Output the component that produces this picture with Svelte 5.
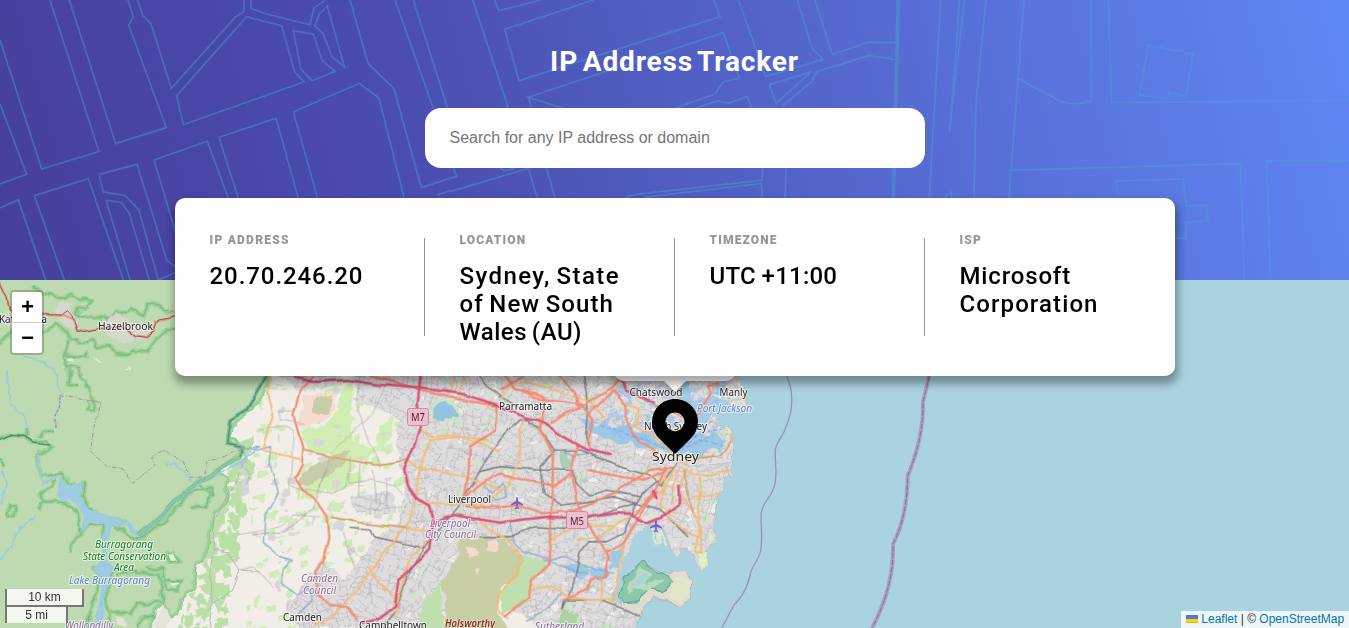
<script>
  const details = [
    { label: 'IP ADDRESS', lines: [['20.70.246.20', 0.93]], ws: 0, hs: 1.25 },
    { label: 'LOCATION', lines: [['Sydney, State', 1.42], ['of New South', 1.1], ['Wales (AU)', 0.5]], ws: -1.6, hs: 1.15 },
    { label: 'TIMEZONE', lines: [['UTC +11:00', 0.22]], ws: -0.4, hs: 1.15 },
    { label: 'ISP', lines: [['Microsoft', 0.85], ['Corporation', 1.1]], ws: 0, hs: 1.15 }
  ];

  let seed = 7;
  const rnd = () => ((seed = (seed * 16807) % 2147483647) / 2147483647);

  // Minor street mesh: rotated blocks of short lines with varied density
  function streets(x0, y0, x1, y1) {
    let d = '';
    for (let y = y0; y < y1; y += 19)
      for (let x = x0; x < x1; x += 19) {
        const a = rnd() * 1.1 - 0.3;
        const c = Math.cos(a), s = Math.sin(a);
        const cx = x + 8 + rnd() * 4, cy = y + 8 + rnd() * 4;
        for (let k = -9; k <= 9; k += 4.2 + rnd() * 5) {
          const l = 3 + rnd() * 8, m = 3 + rnd() * 8, o = rnd() * 6 - 3;
          d += `M${(cx - l * c - k * s + o).toFixed(1)} ${(cy - l * s + k * c).toFixed(1)}l${(2 * l * c).toFixed(1)} ${(2 * l * s).toFixed(1)}`;
          d += `M${(cx + m * s + k * c).toFixed(1)} ${(cy - m * c + k * s + o).toFixed(1)}l${(-2 * m * s).toFixed(1)} ${(2 * m * c).toFixed(1)}`;
        }
      }
    return d;
  }

  function patches(n, x0, y0, x1, y1, max) {
    let d = '';
    for (let i = 0; i < n; i++) {
      const x = x0 + rnd() * (x1 - x0), y = y0 + rnd() * (y1 - y0);
      const w = 1.5 + rnd() * max, h = 1.5 + rnd() * max;
      d += `M${x.toFixed(1)} ${y.toFixed(1)}l${w.toFixed(1)} ${(-h * 0.3).toFixed(1)}l${(w * 0.2).toFixed(1)} ${(h * 0.6).toFixed(1)}l${(-w * 0.5).toFixed(1)} ${(h * 0.5).toFixed(1)}l${(-w * 0.8).toFixed(1)} ${(-h * 0.1).toFixed(1)}z`;
    }
    return d;
  }

  // Bush fringe that follows the slanted edge of the forest
  function fringe(n) {
    let d = '';
    for (let i = 0; i < n; i++) {
      const t = rnd(), y = 440 + t * 190;
      const x = 236 - t * 62 + rnd() * (16 + t * 26);
      const w = 3 + rnd() * 8, h = 3 + rnd() * 9;
      d += `M${x.toFixed(1)} ${y.toFixed(1)}l${w.toFixed(1)} ${(-h * 0.4).toFixed(1)}l${(w * 0.1).toFixed(1)} ${h.toFixed(1)}l${(-w * 0.6).toFixed(1)} ${(h * 0.4).toFixed(1)}z`;
    }
    return d;
  }

  const mesh = streets(235, 370, 760, 632);
  const ruralGreen = patches(230, 244, 376, 425, 628, 8);
  const ruralGrey = patches(60, 265, 380, 420, 620, 8);
  const bushEdge = fringe(150);
  const cityGreen = patches(260, 405, 380, 735, 628, 4);
  const cityDark = patches(200, 400, 380, 735, 628, 4);
  const cityPale = patches(190, 400, 380, 735, 628, 5);
  const harbour = patches(120, 600, 380, 722, 440, 6);

  const forest =
    'M-20-20H810V290L780 370 745 400 695 440 690 470 725 495 720 530 660 560 664 580 686 594 682 660 644 704 628 780 612 840 588 858 580 930 548 950 536 1000 510 1012 490 970 468 990 450 1064H-20Z';
  const forestEdges = [
    'M100 15 125 40 160 45 180 55 220 45 240 60 275 60 262 82 235 85 225 105 270 110 290 120 305 108 330 118 350 98 395 88 430 108 445 75 475 70 490 95 525 95',
    'M0 190 35 155 90 150 120 165 165 135 200 150 210 175 250 190 280 180 292 205 330 195 350 220 385 228 400 212 440 216 465 180 500 150 525 150',
    'M205 180 195 225 260 232 262 215M195 225 200 262 235 262 240 290 270 325 272 350 285 365 283 392 265 390 268 365M210 262 208 315 232 318',
    'M0 478 30 465 75 468 95 488 130 486 155 500 140 515 108 518 M120 475 125 460 162 450M80 445 82 468',
    'M0 535 15 560M30 675 48 680 40 710 25 705Z',
    'M108 518 125 590 160 585 185 580 200 600 240 630 250 605 250 650 275 695 320 710 370 725 415 760 480 718 530 660 600 600 680 560 725 530',
    'M160 600 150 620 120 640 130 665 115 690M130 665 165 665 200 670 235 700 240 760 215 790 212 815M245 755 270 735 310 735 315 800 305 860 280 868 305 890 280 960 262 1044M335 1044 315 960 330 900 345 870 410 870 M340 735 410 780 490 725 580 630 635 625 620 675 575 684M600 610 640 650',
    'M440 865 490 868 500 930 530 930 545 905 500 900M500 820 520 825 540 845 510 845ZM355 885 400 875 480 885 490 965 410 972 390 1005 330 990M410 1044 430 1008 490 1020'
  ];

  const landC =
    'M-1440 18H775L790 60 802 82 793 125 770 105 740 100 732 135 700 130 725 175 745 160 757 200 755 320 730 320 722 365 702 380 708 440 696 470 711 514 680 540 686 578 670 597 652 585 640 558 612 535 590 560 570 530 548 478 508 462 475 490 462 530 455 584 430 580 420 625 405 690 470 750 472 790H-1440Z';

  const motorways = [
    'M-560 18 -490 36 -400 30 -300 45 -180 55 -60 70 50 104 105 130 145 144 175 150 240 195 320 240 390 255',
    'M-178 18 -187 100 -180 170 -202 240 -228 300 -215 350 -190 385 -150 410 -138 455 -150 540 -180 570 -245 630 -255 710 -300 745 -350 755',
    'M-140 460 -80 435 0 448 60 458 130 448 210 440 300 446 400 430 455 430 475 450 500 461 550 440 600 400 598 348',
    'M425 30 435 60 480 80 520 100M520 365 530 385'
  ];
  const primaries = [
    'M-500 18 -540 60 -560 140 -530 230 -535 290 -555 325 -530 360 -490 395 -460 440 -455 500 -470 570 -494 600 -490 670 -450 705 -400 715 -370 748',
    'M-325 18 -230 45 -180 62 -60 88 50 108 45 180 -30 230 -35 310 -45 380 M-40 380 -10 350 60 310 130 330 210 345',
    'M-40 410 60 412 120 405 185 430 260 425 330 400 400 370 480 320 510 300 580 290',
    'M75 18 100 60 170 72 190 85 185 150 180 180 215 250 215 440 205 580 150 630 145 680 70 740',
    'M130 60 180 90 250 95 310 105 340 150 325 210 330 240',
    'M240 18 285 65 300 115 360 75 400 50 420 25M330 130 400 60 440 110 440 155 480 220 520 240 530 270',
    'M290 225 275 300 290 400 325 460 385 560 380 620 330 630 320 660 250 690',
    'M460 440 520 375 560 290M380 550 430 520 490 420 530 370',
    'M520 105 560 120 640 150 670 100 690 70 680 45 715 40',
    'M60 60 130 20M330 300 420 320 500 330 560 300M215 350 280 310M210 160 260 130 300 115'
  ];
  const secondaries = [
    'M-625 18 -635 70 -620 130 -650 240 -540 268',
    'M-530 240 -450 260 -310 285 -220 270 -190 290 -60 315 60 360',
    'M-445 442 -350 460 -220 475 -150 480',
    'M-500 770 -440 740 -370 660 -280 540 -220 470 -190 370 -185 300 -150 210 -60 200 60 240',
    'M-180 180 -145 200 -85 195 20 210M-75 20 -90 75M-45 20 -65 90',
    'M-330 590 -300 645 -245 690 -210 560 -150 510M-245 690 -255 740',
    'M-180 405 -110 400 0 405 80 350 120 270 120 180 135 145',
    'M0 455 80 510 130 570 110 620 60 670 50 720 80 745',
    'M145 662 220 650 260 680 330 690 400 690M400 700 420 590 435 510M365 630 365 685',
    'M210 510 290 465 400 465 450 440M290 510 350 500 410 460',
    'M60 90 90 45 140 40 240 65 330 95 370 140',
    'M430 100 480 120 470 170 510 190 560 230 610 280 650 265 720 255 750 210 752 190',
    'M595 290 640 310 700 315 750 300M610 300 600 370 640 430 660 480 668 545 648 550 652 500 620 490 560 440',
    'M580 300 550 370 530 370M560 300 540 410 590 430M590 300 575 400M640 380 720 370M660 320 655 500'
  ];
  const rails = [
    'M-390 475 -330 480 -320 500 -230 520 -165 535 -60 400 -20 340 0 300 60 210 120 150 145 148 180 180 220 240 255 240 300 240 370 270 450 300 520 320 540 350 590 280',
    'M0 305 60 290 180 300 280 300 290 345 330 375 380 360 480 380 540 330',
    'M310 18 318 60 325 130 320 200 330 240M222 240 180 290 190 370 245 405 320 395 400 380 470 400',
    'M-165 535 -220 620 -250 720 -290 770M0 500 90 500 170 470 250 475 330 445 400 420 470 400 490 370',
    'M470 400 430 490 380 515 330 515 300 550 280 640 245 715 250 690 360 690 440 720 480 740',
    'M0 18 30 55 60 80 110 110M470 400 540 420 580 460 620 500'
  ];
  const waters = [
    'M-720 228-670 240-625 230 -630 280 -605 370 -645 440 -650 520 -600 560 -560 570 -590 600 -595 640 -550 675 -515 650 -500 690 -540 730',
    'M10 350 30 370 70 340 80 380 50 390 20 380M90 460 100 520 130 550 190 560 240 590 320 610M330 250 280 255 250 240',
    'M190 570 250 560 300 580 350 600 400 610M240 670 220 700 200 720 140 750'
  ];

  const labels = [
    [98, 330, 55, 'Hazelbrook', 'town'], [499, 410, 53, 'Parramatta', 'town'], [629.5, 396, 53, 'Chatswood', 'town'],
    [719.5, 396, 28, 'Manly', 'town'], [644, 430, 63, 'North Sydney', 'town'], [448, 503, 43, 'Liverpool', 'town'],
    [283, 621, 39, 'Camden', 'town'], [359, 629, 68, 'Campbelltown', 'town'], [-1, 323, 48, 'Katoomba', 'town'],
    [652, 461, 47, 'Sydney', 'city'], [697, 412, 55, 'Port Jackson', 'sea'], [69, 584, 81, 'Lake Burragorang', 'sea'],
    [95, 548, 58, 'Burragorang', 'park'], [83, 560, 83, 'State Conservation', 'park'], [114, 571, 20, 'Area', 'park'],
    [430, 527, 40, 'Liverpool', 'area'], [425, 538, 51, 'City Council', 'area'], [301, 582, 37, 'Camden', 'area'],
    [303, 594, 33, 'Council', 'area'], [65, 629, 48, 'Wollondilly', 'area'], [535, 630, 49, 'Sutherland', 'area'],
    [445, 627, 50, 'Holsworthy', 'mil']
  ];

  const plane = 'M0-6C.8-6 1-4 1-2L6 1V2.5L1 1 .7 4 2.4 5.3V6.3L0 5.6-2.4 6.3V5.3L-.7 4-1 1-6 2.5V1L-1-2C-1-4-.8-6 0-6Z';
</script>

<main>
  <header>
    <svg class="pattern" viewBox="0 0 1349 280" aria-hidden="true">
      <g transform="scale(.33333)">
        <path d="M0 120 125 507 297 455 150 0M0 312 80 523 0 552M208 0 347 431 499 383 386 75 400 50 384 0M412 0 429 46 453 72 514 265 705 52 732 34V0M753 0V25L800 42 930 74 942 24 975 2M530 287 740 50 845 77 884 216 912 246 550 374ZM880 92 940 103 967 182 1005 214 937 242 903 208ZM945 78 958 42 982 18 1033 200 995 170 970 102Z" />
        <path d="M1050 0 1104 190 1182 266 1264 563 1350 535M1185 0 1300 325M1240 0 1343 325M880 336 1078 250 1137 294 1212 592M880 336 953 595M657 412 828 355 895 595M657 412 715 595M462 480 622 424 685 595M462 480 545 760M297 523 411 493 500 780 524 800M297 523 310 576 375 586 416 628 475 840 524 818M103 587 265 536 370 840M103 587 193 840M0 624 55 600 137 840M318 600 365 608 388 640 448 840M318 600 390 840M1310 585 1350 572" />
        <path d="M1418 0 1525 325M1484 0 1496 32 1622 0M1514 88 1780 0M1514 88 1557 242 2160 50 2142 0M1690 325 1585 292 2170 98 2218 235 2170 245 2145 282 2025 325M2215 0 2297 230 2470 178 2437 147 2392 0M2445 0 2497 163 2605 127 2700 128M1585 292 1595 325M2085 325 2155 302 2185 310 2242 290 2255 325M2308 254 2435 215 2328 310ZM2345 320 2435 245 2450 215 2605 167 2700 180M1350 575 1585 505 1612 595M1640 505 1665 595M1500 505 1515 512 1545 505M1350 535 1370 530 1360 505M1875 595 1900 584 2287 541V505M1930 592 2284 550 2287 595M2358 505 2355 595" />
        <path class="wide" d="M2695 0 2680 595" />
        <path d="M2822 0 2788 595M2878 0 2870 130 2848 400 2893 0M2958 0 2928 310 2922 595M3072 0 3027 595M3052 235 3175 300Q3215 320 3274 304V0M3325 0 3335 308 4050 301M3445 137 3580 161 3557 290 3507 276 3503 296 3418 285ZM3027 511 3721 491 3733 840M3812 840 3800 482H4050M3355 600 3348 543 3550 537 3560 618 3618 614 3624 662 3560 668 3557 715H3520M2830 595 2855 575V595" />
      </g>
    </svg>
    <h1>IP Address Tracker</h1>
    <form onsubmit={(e) => e.preventDefault()}>
      <input type="text" placeholder="Search for any IP address or domain" aria-label="Search" />
    </form>
    <section class="card">
      {#each details as item}
        <div class="item">
          <h2 style="letter-spacing:{item.hs}px">{item.label}</h2>
          <p style="word-spacing:{item.ws}px">
            {#each item.lines as [line, ls]}<span style="letter-spacing:{ls}px">{line}</span>{/each}
          </p>
        </div>
      {/each}
    </section>
  </header>

  <section class="map">
    <svg class="tiles" viewBox="0 280 1349 348" aria-hidden="true">
      <defs>
        <clipPath id="land" transform="translate(480 370) scale(.33333)"><path d={landC} /></clipPath>
        <clipPath id="urban">
          <path d="M350 372H760V632H545L500 600 520 560 495 540 460 538 455 580 440 628H300L285 610 320 560 345 580 375 540 400 520 405 490 395 440 400 420 380 410 360 400ZM280 372H340V382L300 392ZM350 495 392 492 395 515 355 512Z" />
        </clipPath>
        <clipPath id="wood"><path d={forest} /></clipPath>
        <filter id="rough" filterUnits="userSpaceOnUse" x="-10" y="270" width="1369" height="370" color-interpolation-filters="sRGB">
          <feTurbulence type="fractalNoise" baseFrequency=".1" numOctaves="2" seed="4" />
          <feDisplacementMap in="SourceGraphic" scale="7" xChannelSelector="R" yChannelSelector="G" />
        </filter>
        <filter id="wiggle" filterUnits="userSpaceOnUse" x="-10" y="270" width="1369" height="370" color-interpolation-filters="sRGB">
          <feTurbulence type="fractalNoise" baseFrequency=".05" numOctaves="1" seed="9" />
          <feDisplacementMap in="SourceGraphic" scale="6" xChannelSelector="R" yChannelSelector="G" />
        </filter>
        <pattern id="hatch" width="4" height="4" patternUnits="userSpaceOnUse" patternTransform="rotate(45)">
          <path d="M0 0V4" stroke="#c9a48c" stroke-width=".7" opacity=".5" />
        </pattern>
      </defs>
      <rect x="0" y="280" width="1349" height="348" fill="#aad3df" />

      <g filter="url(#rough)">
        <g transform="translate(480 370) scale(.33333)">
          <path d={landC} fill="#f1eee8" stroke="#a79bb0" stroke-width="2" />
          <path d="M490 573 550 612 618 603 636 630 632 685 600 711 560 692 520 685 492 712 470 760 420 715 422 640Z" fill="#dfddce" stroke="#a79bb0" stroke-width="2" />
        </g>

        <path d={ruralGreen} fill="#d0eab9" />
        <path d="M340 390 355 380 350 400 352 440 375 450 380 425 395 415 390 440 365 462 330 455 308 450 302 432 325 425 337 412ZM300 490 350 455 352 470 310 500ZM325 480 360 470 365 482 330 492Z" fill="#d0edb2" />
        <path d="M304 395 335 392 335 412 322 422 297 427Z" fill="#f6dccf" />
        <path d="M314 397 332 395 330 412 312 416ZM296 483C310 462 330 456 350 450L343 466 305 487Z" fill="#c6cda8" />
        <path d={ruralGrey} fill="#d8d6d8" />
        <path d={bushEdge} fill="#bcdfa9" />

        <g clip-path="url(#urban)">
          <g clip-path="url(#land)">
            <rect x="270" y="370" width="500" height="262" fill="#dfdcde" />
            <path d={cityPale} fill="#f1eee9" />
            <path d={cityDark} fill="#d0cdd2" />
            <path d={cityGreen} fill="#c8eabf" />
            <path d={mesh} fill="none" stroke="#b1aeb3" stroke-width=".5" />
          </g>
        </g>

        <g transform="translate(0 280) scale(.33333)">
          <path d={forest} fill="#bddab1" stroke="#8cc389" stroke-width="5" stroke-linejoin="round" />
          <g clip-path="url(#wood)" fill="none" stroke-linejoin="round">
            {#each forestEdges as d}<path {d} stroke="#9fd09a" stroke-width="14" />{/each}
            <path d={forest} stroke="#9fd09a" stroke-width="16" />
            {#each forestEdges as d}<path {d} stroke="#7cbc80" stroke-width="4" />{/each}
          </g>
          <path d="M170 75 200 60 215 95 232 120 240 150 205 140 165 110ZM300 130 355 100 380 112 400 130 440 135 450 155 430 180 405 175 400 190 375 185 330 175ZM20 95 50 110 130 110 140 130 60 150 25 140Z" fill="#d6d8cb" />
          <path d="M275 235 305 245 300 250ZM370 265 390 262 395 270ZM205 235 220 235 220 245 205 245ZM505 822 520 824 530 842 512 842ZM512 905 540 910 520 918Z" fill="#e6f0d4" />
          <path d="M345 1005 365 1010 385 1040 355 1035ZM460 1044 490 975 515 1010 500 1044Z" fill="#e4e5d8" />
          <path d="M175 585 205 612 245 612 242 650 270 690 340 710 405 738 418 770 380 740 340 738 320 790 320 850 345 870 325 900 312 960 308 1064H270L305 940 305 890 278 870 303 850 305 790 318 740 275 725 250 758 250 700 220 665 200 655 195 668 175 650Z" fill="#9fcbe2" />
          <g fill="none" stroke="#9ccbe0" stroke-width="5">
            <path d="M68 225 150 255 172 290 180 345M20 268 32 370 75 420 90 445M110 520 130 608 180 585M0 840 40 790 60 745 110 705M8 570 18 610 5 670M495 550 520 545 555 580 575 605M415 772 480 718 530 660 600 610 730 540 780 500" />
          </g>
        </g>

        <g transform="translate(480 370) scale(.33333)">
          <path d="M-60 506 70 506 125 560 120 610 60 660 50 720 90 790H-110L-105 680-120 640-90 600-70 570Z" fill="#c9cfa6" />
          <path d="M-60 506 70 506 125 560 120 610 60 660 50 720 90 790H-110L-105 680-120 640-90 600-70 570Z" fill="url(#hatch)" />
          <path d="M-40 530-10 535-5 555-30 565ZM15 515 50 510 55 540 20 545ZM-15 590 0 600-10 620Z" fill="#f4d9cc" />
          <path d="M125 560 190 570 205 590 150 640 140 700 70 730 60 670 120 610Z" fill="#bfdfae" />
          <path d="M-120 640-170 690-190 790H-110Z" fill="#bfdfae" />
          <path d="M245 720 290 735 290 790H230Z" fill="#a9d3a0" />
          <path d="M-145 90-100 85-65 105-60 145-100 155-145 150Z" fill="#cbe5bd" />
          <path d="M-140 110-105 95-75 110-65 135-95 148-110 155-140 145Z" fill="#93c3e0" />
          <path d="M238 245 262 245 272 285 252 295 240 275Z" fill="#a8cdb8" />
          <g fill="#9ec9e6">
            <path d="M300 145 330 150 340 170 370 150 400 175 440 165 470 190 520 180 530 220 580 215 600 200 625 215 650 190 680 200 700 180 735 215 725 245 690 235 665 262 630 245 590 262 560 245 530 232 480 235 450 210 420 225 385 205 350 200 310 170Z" />
            <path d="M600 80 625 60 640 90 690 80 740 90 745 130 700 130 670 160 630 150Z" opacity=".85" />
            <path d="M600 30 625 40 630 70 605 75ZM715 40 735 50 720 80 700 75ZM320 600 360 590 390 610 370 640 340 620ZM250 590 300 580 330 600 300 630ZM395 540 425 540 420 590 390 600Z" />
            <path d="M470 490 505 464 545 480 570 535 595 560 612 538 640 560 655 590 640 605 550 605 490 573 430 640 415 700 395 690 420 600Z" fill="#aad3df" />
          </g>
          <path d="M488 574 530 605 585 630 550 665 500 655 475 695 430 698 420 675 432 628Z" fill="#8cc6ae" stroke="#69a999" stroke-width="4" />
          <path d="M480 590 515 615 500 640 530 625 550 635 510 660 460 655 440 675 450 635Z" fill="#b5dcbd" />
          <path d="M485 610 505 625 480 645 455 645Z" fill="#aad3df" />
          <path d="M590 620 625 620 630 670 600 700 570 680Z" fill="#e3e5ca" />
          <path d="M480 440 530 425 555 440 530 455 500 455Z" fill="#dfe5d3" />
          <path d="M515 470 530 520 540 518 535 475M540 480 555 525" fill="none" stroke="#dfe5d3" stroke-width="7" />
          <path d="M650 555 680 545 682 580 668 592ZM690 480 705 510 685 510ZM752 195 748 175 740 190Z" fill="#dcf0c0" />
        </g>
        <path d={harbour} fill="#94c0e8" opacity=".6" />
      </g>

      <g filter="url(#wiggle)">
        <g transform="translate(0 280) scale(.33333)" fill="none">
          <path d="M808 280 775 330 740 390 690 420 680 490 725 500 720 530 600 605 530 660 480 715 415 765" stroke="#84c191" stroke-width="13" />
          <path d="M720 530 600 605 530 660 480 715 415 765" stroke="#8cc5cf" stroke-width="3.5" />
          <path d="M808 280 775 330 740 390 690 420 680 490 725 500 720 530" stroke="#4d9681" stroke-width="5" />
          <path d="M0 478 30 465 75 470 100 490 150 495" stroke="#4a8a72" stroke-width="4" />
          <path d="M180 347 300 367 282 440 272 510 320 562 370 570 402 607 465 555 455 530 490 515 550 545 570 595 610 590 625 540 670 530 700 510 780 500" stroke="#a093a4" stroke-width="3" stroke-dasharray="14 5 3 5" />
          <path d="M180 350 178 385 165 410 165 445" stroke="#8b8bc8" stroke-width="4" stroke-dasharray="10 4" />
          <path d="M725 500 740 540 700 620 640 720 640 800 625 880 640 960 630 1050M640 810 690 820 720 870 780 875M720 870 700 930 640 970" stroke="#b3acb5" stroke-width="2.5" />
          <path d="M725 600 745 590 748 640 715 655ZM715 575 740 560 740 590Z" fill="#d6d4d9" />
          <path d="M-10-8 18 50 25 90 60 110 130 104 190 108 220 120 235 152 300 142 385 148 405 165 440 172 462 155 470 125 525 110" stroke="#f09781" stroke-width="7" />
          <path d="M-10-8 18 50 25 90 60 110 130 104 185 105 200 95 225 125 235 155 300 142 385 148 410 168 440 172 462 155 475 120 525 110" stroke="#8b5960" stroke-width="3" />
        </g>

        <g transform="translate(480 370) scale(.33333)" fill="none" stroke-linejoin="round" stroke-linecap="round">
          {#each waters as d}<path {d} stroke="#8daccb" stroke-width="4" />{/each}
          <path d="M-660 180-590 170-560 180-570 350-440 370-400 350-390 300M-360 20-370 90-350 170-300 280M-390 260-390 340-330 330-250 345-230 370M-380 400-300 420-240 410M-530 160-600 150-600 120-560 125M-380 180-320 130-290 60M-370 180-450 250-480 350M-480 440-560 435-600 470-720 490M-390 530-360 560-300 580-330 640-320 700M-410 490-370 600M-720 600-680 590-620 650M-720 280-690 310-700 340M-360 280-365 380-300 390M-320 300-310 400M-280 330-280 420" stroke="#aeabb1" stroke-width="2.2" />
          <path d="M-680 490-600 490-500 420-465 300-430M-180 90-220 100-225 160-250 230-260 320M-15 480 20 520 20 570-20 600M350 608 620 604M520 525 600 555" stroke="#b2a3b8" stroke-width="3" stroke-dasharray="12 5" />
          {#each rails as d}<path {d} stroke="#77777b" stroke-width="4" />{/each}
          {#each secondaries as d}<path {d} stroke="#f5bb72" stroke-width="5.5" />{/each}
          {#each primaries as d}<path {d} stroke="#f68a70" stroke-width="6.5" />{/each}
          {#each motorways as d}<path {d} stroke="#db5379" stroke-width="7.5" />{/each}
          <path d="M-530 240-450 260-310 285-220 270M-445 442-350 460-220 475M610 260 650 265 720 255 750 210M610 300 620 370 640 430" stroke="#c59a63" stroke-width="3.5" />
          <path d="M340 155 400 180 470 200 540 230 620 230 700 200M550 225 570 190 640 110M600 240 650 210 730 225M610 230 700 150M620 200 730 180" stroke="#6d97e8" stroke-width="2.5" stroke-dasharray="12 9" />
        </g>
      </g>

      <g transform="translate(700 370) scale(.33333)" fill="none" stroke-linejoin="round">
        <path d="M260 18C278 55 282 110 262 160 250 205 230 210 226 240 224 275 232 310 225 340 217 385 184 395 183 435 184 480 189 520 180 550 172 575 155 590 150 615 138 670 115 690 102 705L65 774" stroke="#9c91b5" stroke-width="4" />
        <path d="M688 18 669 95Q672 200 623 318 622 440 579 522 583 650 516 774" stroke="#a9a0c0" stroke-width="12" />
        <path d="M688 18 669 95Q672 200 623 318 622 440 579 522 583 650 516 774" stroke="#906b97" stroke-width="3" stroke-dasharray="16 5" />
      </g>

      <g class="shields">
        <rect x="407.5" y="408.5" width="21" height="17" rx="2" />
        <text x="411" y="421" textLength="14" lengthAdjust="spacingAndGlyphs">M7</text>
        <rect x="566.5" y="511.5" width="21" height="17" rx="2" />
        <text x="570" y="524.5" textLength="14" lengthAdjust="spacingAndGlyphs">M5</text>
      </g>
      <path d={plane} transform="translate(517 503)" fill="#7d5fc0" />
      <path d={plane} transform="translate(656 526)" fill="#7d5fc0" />
      {#each labels as [x, y, w, t, kind]}
        <text {x} {y} class={kind} textLength={w} lengthAdjust="spacingAndGlyphs">{t}</text>
      {/each}
    </svg>

    <div class="popup"></div>
    <svg class="pin" width="46" height="56" viewBox="0 0 46 56">
      <path d="M39.263 7.673c8.897 8.812 8.966 23.168.153 32.065l-.153.153L23 56 6.737 39.89C-2.16 31.079-2.23 16.723 6.584 7.826l.153-.152c9.007-8.922 23.52-8.922 32.526 0zM23 14.435c-5.211 0-9.436 4.185-9.436 9.347S17.79 33.128 23 33.128s9.436-4.184 9.436-9.346S28.211 14.435 23 14.435z" />
    </svg>

    <div class="zoom">
      <button aria-label="Zoom in">+</button>
      <button aria-label="Zoom out">−</button>
    </div>
    <div class="scale">
      <div class="km">10 km</div>
      <div class="mi">5 mi</div>
    </div>
    <div class="credit">
      <svg width="12" height="8" viewBox="0 0 12 8"><path fill="#4c7be1" d="M0 0h12v4H0z" /><path fill="#ffd500" d="M0 4h12v3H0z" /><path fill="#e0bc00" d="M0 7h12v1H0z" /></svg>
      <a href="#leaflet">Leaflet</a> <span>|</span> © <a href="#osm">OpenStreetMap</a>
    </div>
  </section>
</main>

<style>
  :global(body) { margin: 0; overflow: hidden; }
  main { height: 628px; overflow: hidden; font-family: Roboto, sans-serif; }
  header {
    position: relative;
    z-index: 2;
    box-sizing: border-box;
    height: 280px;
    display: flex;
    flex-direction: column;
    align-items: center;
    padding-top: 45px;
    background: linear-gradient(75deg, #463f9b 0%, #4b4eaf 32%, #566bd2 66%, #5f87f4 100%);
  }
  .pattern { position: absolute; inset: 0; width: 1349px; height: 280px; fill: none; stroke: #49a5d3; stroke-width: 5; opacity: .42; }
  .wide { stroke-width: 11; }
  h1 { position: relative; margin: 0; height: 34px; line-height: 34px; font-size: 28px; font-weight: 700; color: #fff; letter-spacing: .85px; word-spacing: -3px; white-space: nowrap; }
  form { position: relative; margin-top: 29px; }
  input {
    box-sizing: border-box;
    display: block;
    width: 500px;
    height: 60px;
    padding: 0 25px;
    border: 0;
    border-radius: 16px;
    background: #fff;
    outline: 0;
    font: 16px "Liberation Sans", sans-serif;
  }
  input::placeholder { color: #757575; opacity: 1; }
  .card {
    position: relative;
    box-sizing: border-box;
    flex: none;
    display: grid;
    grid-template-columns: repeat(4, 250px);
    grid-template-rows: 98px;
    width: 1000px;
    height: 178px;
    margin-top: 30px;
    padding: 40px 0;
    border-radius: 10px;
    background: #fff;
    box-shadow: 1px 6px 8px 2px rgba(0, 0, 0, .35);
  }
  .item { box-sizing: border-box; padding-left: 35px; border-right: 1px solid #969696; }
  .item:last-child { border: 0; }
  h2 { margin: -5px 0 15px; font-size: 12px; line-height: 14px; font-weight: 900; color: #969696; }
  p { margin: 0; font-size: 24px; line-height: 28px; font-weight: 500; color: #000; white-space: nowrap; }
  p span { display: block; }

  .map { position: relative; height: 348px; background: #aad3df; overflow: hidden; font-family: "Liberation Sans", sans-serif; }
  .tiles { display: block; width: 1349px; height: 348px; }
  .tiles text { font-family: "Noto Sans", sans-serif; font-size: 10px; paint-order: stroke; stroke: rgba(255, 255, 255, .65); stroke-width: 2px; stroke-linejoin: round; }
  .town { fill: #222; }
  .tiles text.city { fill: #222; font-size: 13px; }
  .sea { fill: #5b83c4; font-style: italic; }
  .park { fill: #138021; font-style: italic; }
  .area { fill: #8e6b9c; font-style: italic; }
  .tiles text.mil { fill: #872a18; font-style: italic; font-weight: 600; stroke-width: 1px; }
  .shields rect { fill: #eac0d0; stroke: #cf8aa2; }
  .tiles .shields text { fill: #5c1533; stroke: none; font-size: 10.5px; }
  .popup { position: absolute; left: 613px; top: 60px; width: 124px; height: 41px; border-radius: 12px; background: #fff; filter: drop-shadow(0 2px 4px rgba(0, 0, 0, .35)); }
  .popup::after { content: ""; position: absolute; left: 51px; top: 41px; border: 11px solid transparent; border-bottom: 0; border-top-color: #fff; }
  .pin { position: absolute; left: 652px; top: 118px; }
  .zoom { position: absolute; left: 10px; top: 10px; width: 30px; border: 2px solid rgba(0, 0, 0, .2); border-radius: 4px; background-clip: padding-box; }
  .zoom button { box-sizing: border-box; display: block; width: 30px; height: 30px; padding: 4px 0 0; border: 0; background: #fff; color: #000; font: bold 22px/26px "Liberation Mono", monospace; text-indent: 1px; }
  .zoom button:first-child { height: 31px; border-bottom: 1px solid #ccc; border-radius: 2px 2px 0 0; }
  .zoom button:last-child { border-radius: 0 0 2px 2px; }
  .scale { position: absolute; left: 5px; bottom: 5px; font-size: 12px; line-height: 13px; text-align: center; color: #333; }
  .scale div { box-sizing: border-box; height: 18px; padding-top: 2px; border: 2px solid #777; background: rgba(255, 255, 255, .8); }
  .km { width: 79px; border-top: 0 !important; }
  .mi { width: 63px; margin-top: -2px; border-bottom: 0 !important; padding-top: 2px !important; }
  .credit { position: absolute; right: 0; bottom: 0; box-sizing: border-box; width: 168px; height: 17px; padding: 0 5px; background: rgba(255, 255, 255, .8); color: #333; font-size: 12px; line-height: 16px; white-space: nowrap; }
  .credit a { color: #0078a8; text-decoration: none; }
</style>
